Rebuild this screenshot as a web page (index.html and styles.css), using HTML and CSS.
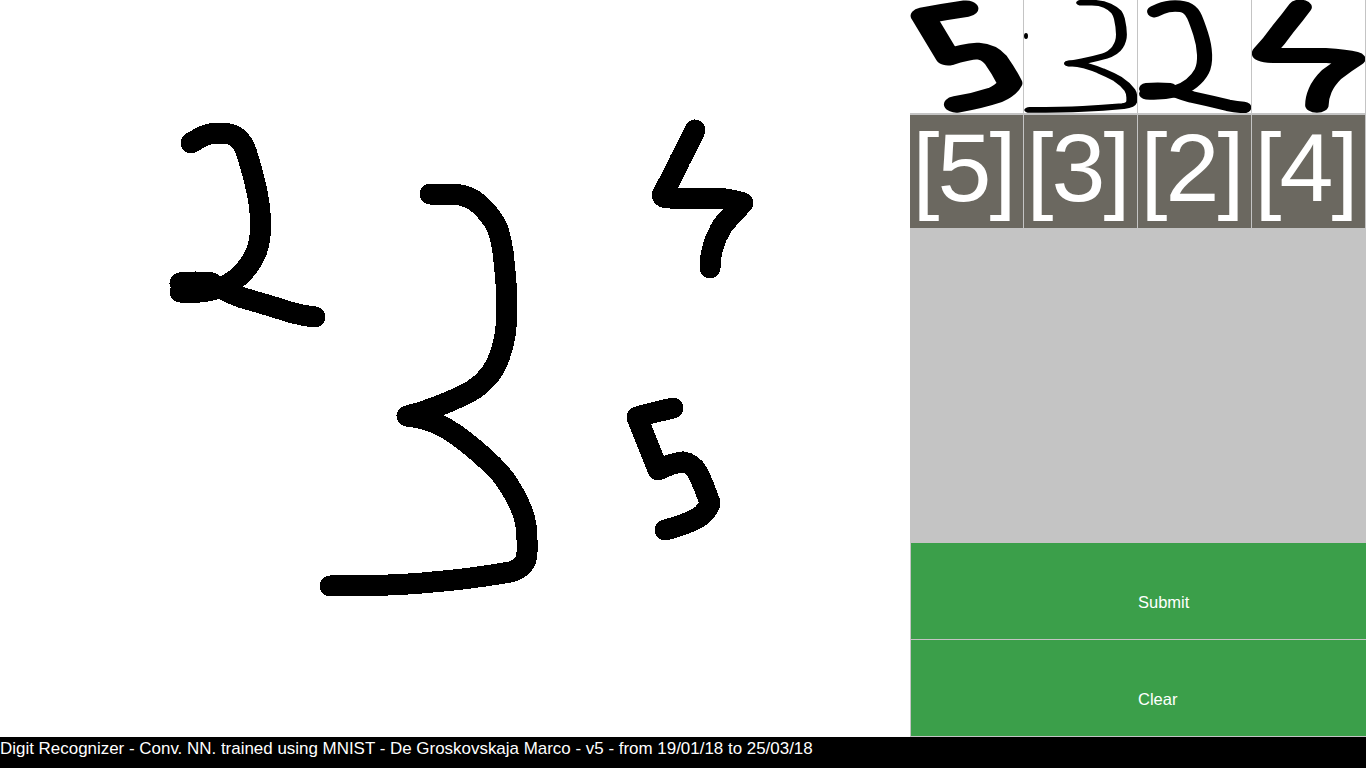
FILE: index.html
```html
<!DOCTYPE html>
<html lang="en">
<head>
<meta charset="utf-8">
<title>Digit Recognizer</title>
<link rel="stylesheet" href="styles.css">
</head>
<body>
<div class="app">
  <main class="workspace">
    <svg class="canvas" viewBox="0 0 910 737" aria-label="Drawing canvas">
      <defs>
        <g id="d2" class="ink">
          <path d="M191 143L199.5 138Q208 133 219.5 133Q231 133 237 137.5Q243 142 246.5 152.5Q250 163 255 183Q260 203 260.5 221.5Q261 240 256.5 251.5Q252 263 242.5 273Q233 283 220 288"/>
          <path d="M180 283Q195 281 212 283M180 292Q200 294 220 288Q232 294 243 298Q268 305 293 313Q305 316 315 317"/>
        </g>
        <g id="d3" class="ink">
          <path d="M430 194L450 194Q468 194 480 205Q490 214 497 227Q501 238 503 252Q507 285 507 310Q507 335 500 355Q493 377 473 390Q455 400 433 408Q420 413 407 416"/>
          <path d="M407 416Q425 418 440 425Q455 433 467 443Q485 457 500 473Q514 490 523 513Q527 525 527 540L527 552Q527 568 510 572Q470 579 433 582Q395 586 330 586"/>
        </g>
        <g id="d4" class="ink">
          <path d="M695 130Q688 145 680 160Q672 178 663 193Q660 198 670 198L717 198Q735 200 743 203Q733 213 723 225Q716 236 713 247Q710 258 710 268"/>
        </g>
        <g id="d5" class="ink">
          <path d="M673 408Q655 412 637 417Q648 445 658 470Q672 463 683 462Q692 463 698 473Q705 488 710 503Q707 512 698 518Q682 526 665 530"/>
        </g>
      </defs>
      <g class="aliased">
        <use href="#d2"/>
        <use href="#d3"/>
        <use href="#d4"/>
        <use href="#d5"/>
      </g>
    </svg>
    <aside class="side">
      <div class="thumbs">
        <div class="cell"><svg class="thumb" viewBox="626 397 95 144" preserveAspectRatio="none"><use href="#d5"/></svg></div>
        <div class="cell"><svg class="thumb" viewBox="319 184 218 413" preserveAspectRatio="none"><use href="#d3"/></svg><span class="speck"></span></div>
        <div class="cell"><svg class="thumb" viewBox="168 122 157 205" preserveAspectRatio="none"><use href="#d2"/></svg></div>
        <div class="cell"><svg class="thumb" viewBox="652 120 101 159" preserveAspectRatio="none"><use href="#d4"/></svg></div>
      </div>
      <div class="predictions">
        <div class="prediction">[5]</div>
        <div class="prediction">[3]</div>
        <div class="prediction">[2]</div>
        <div class="prediction">[4]</div>
      </div>
      <div class="spacer"></div>
      <button class="action" type="button"><span class="label">Submit</span></button>
      <button class="action" type="button"><span class="label">Clear</span></button>
    </aside>
  </main>
  <footer class="status">Digit Recognizer - Conv. NN. trained using MNIST - De Groskovskaja Marco - v5 - from 19/01/18 to 25/03/18</footer>
</div>
</body>
</html>
```
FILE: styles.css
```css
* { box-sizing: border-box; }
html, body { margin: 0; height: 100%; background: #fff; }
body { font-family: "Liberation Sans", Arial, sans-serif; overflow: hidden; }
.app { display: flex; flex-direction: column; height: 768px; }
.workspace { display: flex; height: 737px; }
.canvas { display: block; width: 910px; height: 737px; flex: none; }
.ink { fill: none; stroke: #000; stroke-width: 21; stroke-linecap: round; stroke-linejoin: round; }
.aliased { shape-rendering: crispEdges; }
.side { flex: 1; display: flex; flex-direction: column; min-width: 0; }
.thumbs { display: grid; grid-template-columns: repeat(4, 114px); height: 115px; border-bottom: 2px solid #c4c4c4; }
.cell { position: relative; border-right: 1px solid #c4c4c4; height: 113px; overflow: hidden; }
.thumb { display: block; width: 113px; height: 113px; }
.speck { position: absolute; left: 0; top: 33px; width: 4px; height: 6px; border-radius: 50%; background: #000; }
.predictions { display: grid; grid-template-columns: repeat(4, 114px); height: 113px; background: #6b6860; }
.prediction { border-right: 1px solid #c4c4c4; color: #fff; font-size: 97px; letter-spacing: -2px; line-height: 106px; padding-right: 6px; height: 113px; text-align: center; white-space: nowrap; }
.spacer { height: 315px; background: #c4c4c4; }
.action { display: flex; align-items: center; height: 97px; padding: 23px 0 0 227px; margin: 0; border: 0; border-left: 1px solid #c4c4c4; border-bottom: 1px solid #c4c4c4; background: #3b9f4a; color: #fff; font: 16.5px "Liberation Sans", Arial, sans-serif; text-align: left; }
.status { height: 31px; background: #000; color: #fff; font-size: 16.96px; line-height: 23px; white-space: nowrap; }
```
